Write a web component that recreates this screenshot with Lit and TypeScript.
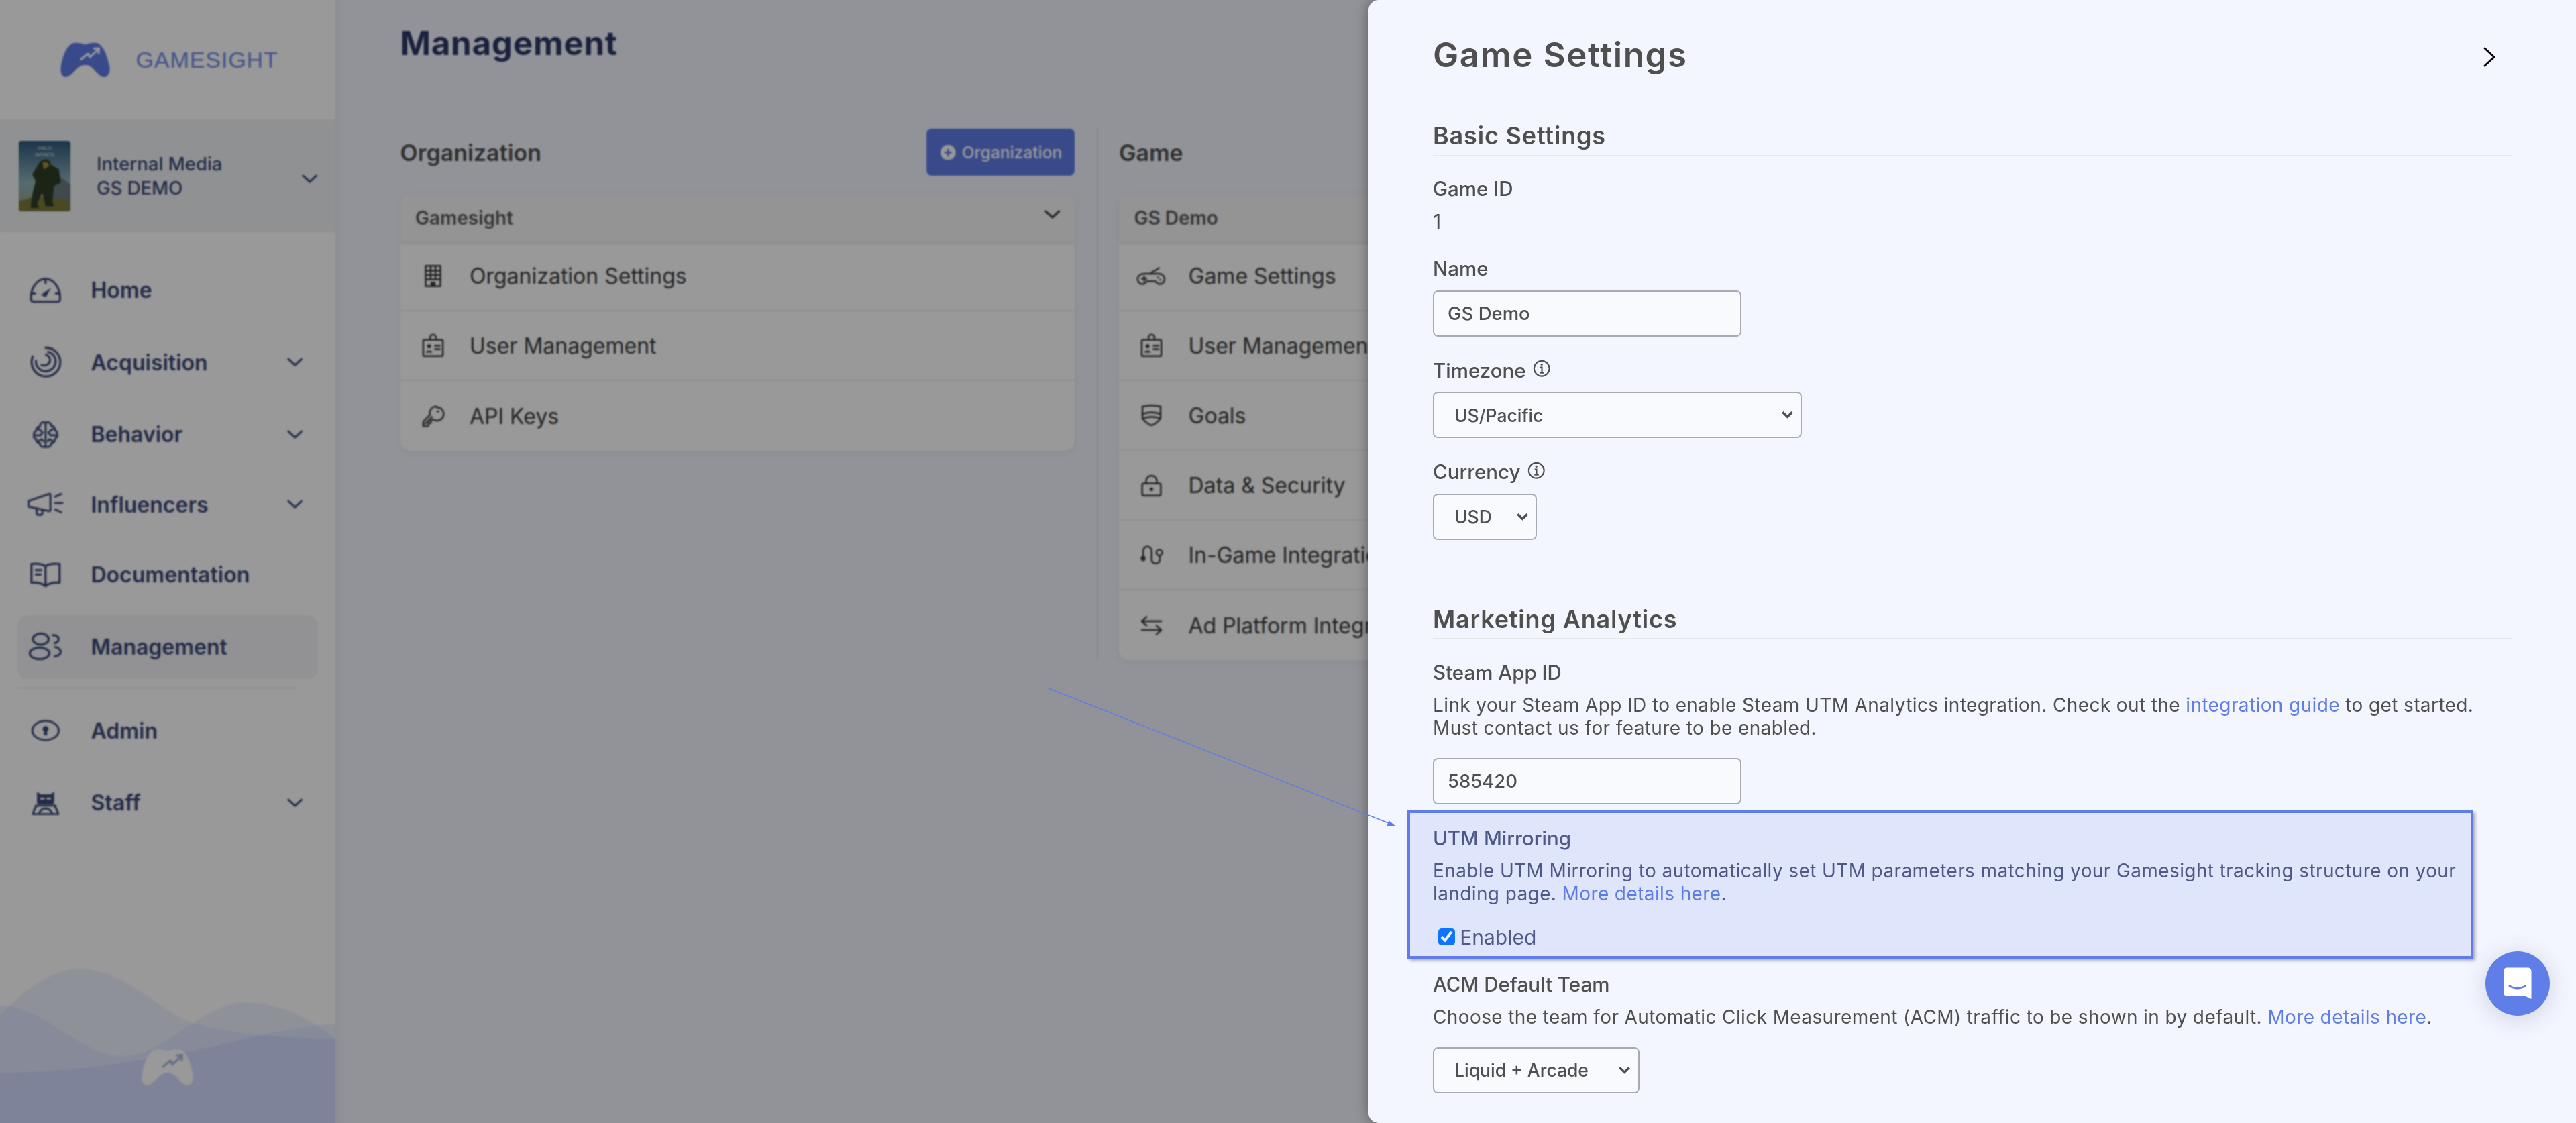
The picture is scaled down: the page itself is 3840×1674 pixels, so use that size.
import { LitElement, html, css } from "lit";
import { customElement } from "lit/decorators.js";

const chevron = html`<svg class="chev" viewBox="0 0 12 7"><path d="M1 1l5 4.6L11 1" /></svg>`;

const navIcons = {
  home: html`<svg viewBox="0 0 24 20" class="nico"><path d="M3.4 18.6C1.8 18.6 1 17.8 1 16 1 7.8 5.8 1.4 12 1.4S23 7.8 23 16c0 1.8-.8 2.6-2.4 2.6z" /><path d="M12 1.600v3M1.400 12.400h2.800M22.600 12.400h-2.800" /><path class="solid" d="M8.600 13.400l7.600-5.200-4 7z" /></svg>`,
  acquisition: html`<svg viewBox="0 0 24 24" class="nico"><path d="M2.400 7.800A10.800 10.800 0 1 0 12 1.200" /><path d="M4.800 11a7.400 7.400 0 0 0 14.700 1.600C20.200 8.400 17.400 5 14 4.400" /><path d="M9 14.200c3 1 6-.6 6.400-3.200.3-2-1-4-3-4.600" /></svg>`,
  behavior: html`<svg viewBox="0 0 24 24" class="nico small"><path d="M9 2.200c1.400-.8 2.400-.4 3 .4.600-.8 1.600-1.200 3-.4 1.200.6 1.800 1.800 1.600 2.800 1.800-.2 3.400 1.400 3 3.400 1.600.6 2.400 2.200 1.800 3.600.6 1.400-.2 3-1.800 3.600.4 2-1.200 3.600-3 3.400.2 1-.4 2.200-1.600 2.800-1.400.8-2.400.4-3-.4-.6.8-1.600 1.200-3 .4-1.200-.6-1.800-1.800-1.600-2.800-1.800.2-3.400-1.400-3-3.400C2.800 15.600 2 14 2.600 12.600 2 11.200 2.800 9.600 4.400 9c-.4-2 1.200-3.600 3-3.400C7.200 4.600 7.800 2.800 9 2.200z" /><path d="M12 2.600v19.200M2.600 12.600h5.200l2-2.400M21.400 12.600h-5.200l-2-2.400M6 7.400l2.600 1.800M18 7.400l-2.600 1.800M6 17.400l2.800-1.600 1.400 1.600M18 17.400l-2.800-1.600-1.400 1.600" /></svg>`,
  influencers: html`<svg viewBox="0 0 30 20" class="nico wide"><path d="M1.400 7.400v4.600l16.600 3.400c.8.100 1.200-.3 1.200-1V2.600c0-.8-.5-1.200-1.200-1zM8 13.300v3.800c0 2 4.600 2 4.600 0v-2.800" /><path d="M23 3.800l5-2.200M23 9h6M23 14.200l5 2.200" /></svg>`,
  documentation: html`<svg viewBox="0 0 24 20" class="nico"><path d="M12 3.400C9 1.800 5 1.400 1.400 1.800V16c3.600-.3 7.600 0 10.600 2.600 3-2.600 7-2.900 10.600-2.600V1.800C19 1.400 15 1.800 12 3.400zV18.600" /><path d="M4.800 6.400h4M4.800 9.800h3.600" /></svg>`,
  management: html`<svg viewBox="0 0 26 22" class="nico wider"><ellipse cx="9.500" cy="5.400" rx="6" ry="4.200" /><ellipse cx="8.600" cy="16.200" rx="7.400" ry="4.400" /><path d="M18.600 2.400c2.600 0 4.400 1.200 4.400 3 0 1.400-1.200 2.600-3 3M20.400 11.400c2.400.4 4.200 2 4.200 3.600 0 1.800-2 3.200-4.600 3.400" /></svg>`,
  admin: html`<svg viewBox="0 0 24 18" class="nico small"><ellipse cx="12" cy="9" rx="10.800" ry="7.800" /><circle class="solid" cx="12" cy="7.800" r="2.400" /><path class="solid" d="M11 8.800h2l.6 4h-3.200z" /></svg>`,
  staff: html`<svg viewBox="0 0 24 20" class="nico small"><path class="solid" d="M5 .8l2.800 2.200h8.400L19 .8v8.800c0 1-.8 1.600-1.800 1.600H6.800c-1 0-1.800-.6-1.800-1.600z" /><path d="M3.800 12.200h16.400M1.800 19c.6-3 1.800-5.400 3.200-6.800M22.200 19c-.6-3-1.800-5.400-3.200-6.800M1.600 19.200h20.800M7 18c1-2.400 3-3.400 5-3.400s4 1 5 3.400" /><path class="cut" d="M8.200 6.400h2.400M13.400 6.400h2.400" /></svg>`,
};

const rowIcons = {
  building: html`<svg viewBox="0 0 20 24" class="rico"><rect x="2.500" y="1.500" width="15" height="21" /><path d="M2.500 6.500h15M2.500 11h15M2.500 15.500h15M7.500 1.500v14M12.500 1.500v14" /><path class="solid" d="M7.500 18h5v4.500h-5z" /></svg>`,
  badge: html`<svg viewBox="0 0 24 24" class="rico"><rect x="2" y="6" width="20" height="16.500" rx="1" /><path d="M9 6V3.500a3 3 0 0 1 6 0V6" /><circle class="solid" cx="8" cy="12.500" r="2" /><path class="solid" d="M4.600 18.800c.4-2.600 6.400-2.600 6.800 0z" /><path d="M14 12h5M14 15.500h5" /></svg>`,
  key: html`<svg viewBox="0 0 24 24" class="rico"><path d="M15.500 1.800a6.800 6.800 0 0 0-6.600 8.600L2 17.600v4.600h4.400l1-1v-2.400h2.400v-2.600l2.600-.9a6.800 6.800 0 1 0 3.100-12.500z" /><path d="M4 19.600l7-7" /><circle class="solid" cx="17" cy="7" r="1.200" /></svg>`,
  pad: html`<svg viewBox="0 0 30 20" class="rico wide"><path d="M7.500 7.500h15c4 0 6.500 2.600 6.500 5.600 0 3-2.300 5.400-5 5.400-2.400 0-3.600-1.400-4.800-3H10.300c-1.200 1.600-2.400 3-4.800 3-2.700 0-5-2.400-5-5.400s3-5.600 7-5.600z" /><path d="M15 7.500C15 4 19 5.500 23 1.500" /><path d="M5 12.800h5M7.500 10.300v5" /><circle class="solid" cx="22" cy="11.500" r="1" /><circle class="solid" cx="24.500" cy="14" r="1" /></svg>`,
  shield: html`<svg viewBox="0 0 24 24" class="rico"><path d="M2.800 2.600c6-1.400 12.400-1.400 18.400 0v10.800c0 3-4.400 6.600-9.200 8.600-4.800-2-9.200-5.600-9.200-8.600z" /><path d="M3 10.400c6-2.400 12-2.400 18 0M3 15c6-2.400 12-2.400 18 0" /></svg>`,
  lock: html`<svg viewBox="0 0 24 24" class="rico"><rect x="2.500" y="10" width="19" height="12.500" rx="1.800" /><path d="M6.500 10V7.600a5.500 5.500 0 0 1 11 0V10" /><circle class="solid" cx="12" cy="16" r="1.800" /></svg>`,
  route: html`<svg viewBox="0 0 24 24" class="rico"><path d="M3.500 13V7.500a4.300 4.300 0 0 1 8.600 0v9.500a4.300 4.300 0 0 0 8.400 0v-3.500" /><circle cx="20" cy="9.500" r="3" /><circle class="solid" cx="3.500" cy="15.500" r="2.600" /></svg>`,
  swap: html`<svg viewBox="0 0 24 24" class="rico"><path d="M2 7.500h20M7 3L2 7.500 7 12" /><path d="M22 16.500H2M17 12l5 4.500-5 4.500" /></svg>`,
};

const logo = (cls: string) => html`<svg class=${cls} viewBox="0 0 74 52">
  <path class="logo-body" d="M20 1c7-2 13 2 17 2s10-4 17-2c9 2 15 16 19 34 2 10-2 17-8 17-7 0-13-10-19-15-5-4-13-4-18 0-7 5-13 15-20 15-6 0-9-7-7-17C4 17 11 3 20 1z" />
  <path class="logo-arrow" d="M30 26l11-9 3 5 12-11M49 9.500l8.500-.5-.5 8.500" />
</svg>`;

const info = html`<svg class="info" viewBox="0 0 20 20"><circle cx="10" cy="10" r="8.600" /><path d="M8 8.800h2.200v6M7.800 14.900h4.800" /><circle class="solid" cx="10" cy="5.500" r="1.200" /></svg>`;

const nav = [
  { label: "Home", icon: navIcons.home },
  { label: "Acquisition", icon: navIcons.acquisition, more: true },
  { label: "Behavior", icon: navIcons.behavior, more: true },
  { label: "Influencers", icon: navIcons.influencers, more: true, tight: true },
  { label: "Documentation", icon: navIcons.documentation, tight: true },
  { label: "Management", icon: navIcons.management, active: true },
];

const orgRows = [
  { label: "Organization Settings", icon: rowIcons.building },
  { label: "User Management", icon: rowIcons.badge },
  { label: "API Keys", icon: rowIcons.key },
];

const gameRows = [
  { label: "Game Settings", icon: rowIcons.pad },
  { label: "User Management", icon: rowIcons.badge },
  { label: "Goals", icon: rowIcons.shield },
  { label: "Data & Security", icon: rowIcons.lock },
  { label: "In-Game Integrations", icon: rowIcons.route },
  { label: "Ad Platform Integrations", icon: rowIcons.swap },
];

@customElement("app-root")
export class AppRoot extends LitElement {
  static styles = css`
    :host {
      display: block;
      position: relative;
      zoom: 2.5;
      width: 1536px;
      height: 669.6px;
      overflow: hidden;
      background: #f3f6fe;
      font-family: Inter, "Noto Sans", sans-serif;
      color: #4f4f4f;
    }

    .page {
      display: flex;
      height: 100%;
    }

    /* sidebar */
    .sidebar {
      position: relative;
      flex: 0 0 200px;
      background: #fff;
      display: flex;
      flex-direction: column;
      color: #3c4878;
    }
    .brand {
      height: 71.2px;
      display: flex;
      align-items: center;
      padding-left: 36px;
      gap: 15.4px;
      flex: none;
    }
    .brand-logo {
      width: 29.6px;
      height: 20.8px;
      flex: none;
    }
    .logo-body {
      fill: #5f7ce8;
    }
    .logo-arrow {
      fill: none;
      stroke: #fff;
      stroke-width: 3;
    }
    .brand-name {
      font-family: "Liberation Sans", Arial, sans-serif;
      font-size: 13.6px;
      letter-spacing: 0.36px;
      color: #6f88e8;
    }
    .account {
      height: 67.2px;
      flex: none;
      background: #f1f2f6;
      display: flex;
      align-items: center;
      padding: 0 10.6px 0 11px;
    }
    .thumb {
      width: 31px;
      height: 42px;
      border-radius: 1.5px;
      flex: none;
      margin-right: 15.6px;
    }
    .account-text {
      flex: 1;
      font-size: 11px;
      line-height: 14.4px;
      font-weight: 500;
    }
    .account .chev {
      margin-top: 4px;
    }
    .chev {
      width: 9.4px;
      height: 5.6px;
      flex: none;
    }
    .chev path {
      fill: none;
      stroke: currentColor;
      stroke-width: 1.5;
      stroke-linecap: round;
      stroke-linejoin: round;
    }
    .nav {
      padding: 15.6px 10.4px 0;
      display: flex;
      flex-direction: column;
    }
    .item {
      height: 38px;
      margin-bottom: 5px;
      flex: none;
      display: flex;
      align-items: center;
      border-radius: 6px;
      font-size: 12.8px;
      font-weight: 600;
      padding-right: 9px;
    }
    .item.tight {
      margin-top: -1.2px;
    }
    .item.active {
      background: #f3f4f7;
    }
    .icon-box {
      width: 22px;
      margin-left: 5.6px;
      margin-right: 16.2px;
      flex: none;
      display: flex;
      justify-content: center;
    }
    .nico {
      width: 19px;
      height: 19px;
      flex: none;
      fill: none;
      stroke: currentColor;
      stroke-width: 1.6;
      stroke-linecap: round;
      stroke-linejoin: round;
      overflow: visible;
    }
    .nico.wide {
      width: 22px;
    }
    .nico.wider {
      width: 20.5px;
    }
    .nico.small {
      width: 17.5px;
      height: 17.5px;
    }
    .solid {
      fill: currentColor;
      stroke: none;
    }
    .cut {
      stroke: #fff;
      stroke-width: 1.5;
    }
    .item .label {
      flex: 1;
    }
    .rule {
      height: 1px;
      width: 166.6px;
      background: #f4f4f6;
      margin: 0 0 6px;
      flex: none;
    }
    .waves {
      position: absolute;
      left: 0;
      bottom: 0;
      width: 200px;
      height: 92px;
    }
    .waves path {
      fill: rgba(100, 126, 255, 0.1);
    }
    .foot-logo {
      position: absolute;
      left: 84.3px;
      bottom: 22.6px;
      width: 31px;
      height: 22px;
    }
    .foot-logo .logo-body {
      fill: #fff;
    }
    .foot-logo .logo-arrow {
      stroke: #a9b4dd;
    }

    /* main column */
    .main {
      flex: 1;
      min-width: 0;
      padding: 0 0 0 38.6px;
      box-shadow: inset 6px 0 8px -6px rgba(0, 0, 0, 0.08);
    }
    .page-title {
      padding-top: 14.5px;
      font-size: 19.6px;
      line-height: 23px;
      letter-spacing: 0.35px;
      font-weight: 700;
      color: #2e3866;
    }
    .cols {
      display: flex;
      margin-top: 39.3px;
      height: 316.2px;
    }
    .col {
      width: 402.2px;
      flex: none;
    }
    .col.first {
      padding-right: 13px;
      border-right: 1px solid #dfe1e8;
      margin-right: 12.6px;
      box-sizing: content-box;
    }
    .col-head {
      height: 28px;
      display: flex;
      justify-content: space-between;
      align-items: center;
      font-size: 13.6px;
      font-weight: 600;
      margin-bottom: 11.2px;
    }
    .add {
      width: 88.4px;
      height: 28px;
      background: #5f7ce8;
      color: #fff;
      border-radius: 3px;
      display: flex;
      align-items: center;
      justify-content: center;
      gap: 3.6px;
      padding-left: 1px;
      box-sizing: border-box;
      font-size: 9.8px;
      font-weight: 500;
    }
    .add svg {
      width: 9px;
      height: 9px;
    }
    .card {
      background: #fff;
      border-radius: 6px;
      box-shadow: 0 1px 6px rgba(60, 70, 110, 0.08);
      overflow: hidden;
    }
    .card-head {
      height: 28px;
      display: flex;
      align-items: center;
      justify-content: space-between;
      padding: 0 8.6px 0 9px;
      background: #f7f7f8;
      box-shadow: 0 1px 2px rgba(0, 0, 0, 0.12);
      font-size: 11.2px;
      font-weight: 600;
      color: #5c5c5c;
      position: relative;
    }
    .card-head .chev {
      margin-top: -4px;
      color: #333;
    }
    .row {
      height: 41.6px;
      display: flex;
      align-items: center;
      font-size: 12.8px;
      border-bottom: 1px solid #eeeeef;
      box-sizing: border-box;
      color: #3d3d3d;
    }
    .row:last-child {
      border-bottom: 0;
    }
    .row-icon {
      width: 14px;
      margin: 0 15px 0 12.4px;
      display: flex;
      justify-content: center;
      flex: none;
    }
    .rico {
      width: 14px;
      height: 14px;
      flex: none;
      fill: none;
      stroke: currentColor;
      stroke-width: 1.7;
      stroke-linecap: round;
      stroke-linejoin: round;
      overflow: visible;
    }
    .rico.wide {
      width: 17px;
    }

    /* dim layer */
    .dim {
      position: absolute;
      inset: 0;
      background: rgba(0, 0, 0, 0.4);
      backdrop-filter: blur(0.5px);
    }

    /* drawer */
    .drawer {
      position: absolute;
      top: 0;
      right: 0;
      bottom: 0;
      width: 720px;
      box-sizing: border-box;
      padding: 0 38.4px;
      background: #f3f6fe;
      border-radius: 6px 0 0 6px;
      box-shadow: 0 0 8px rgba(0, 0, 0, 0.4);
      overflow: hidden;
    }
    .drawer-head {
      height: 44.7px;
      padding-top: 20.7px;
      box-sizing: border-box;
      display: flex;
      justify-content: space-between;
    }
    h1 {
      margin: 0;
      font-size: 20.4px;
      line-height: 24px;
      letter-spacing: 0.65px;
      font-weight: 600;
    }
    .close {
      width: 7px;
      height: 12px;
      margin: 7.2px 10px 0 0;
      fill: none;
      stroke: #000;
      stroke-width: 1.2;
      stroke-linecap: round;
      stroke-linejoin: round;
      overflow: visible;
    }
    h2 {
      margin: 0 0 11.4px;
      font-size: 14.4px;
      line-height: 18px;
      letter-spacing: 0.33px;
      font-weight: 600;
      padding-bottom: 2.2px;
      border-bottom: 1px solid #e4e7ec;
    }
    .basic {
      margin-top: 27.4px;
    }
    .marketing {
      margin-top: 38.4px;
    }
    .field {
      margin-bottom: 12px;
    }
    label,
    .label-line {
      display: flex;
      align-items: center;
      gap: 4px;
      font-size: 11.8px;
      line-height: 16px;
      font-weight: 500;
      margin-bottom: 5px;
    }
    .value {
      font-size: 12px;
      line-height: 16px;
      margin-top: -1.4px;
    }
    .info {
      width: 10.6px;
      height: 10.6px;
      fill: none;
      stroke: currentColor;
      stroke-width: 1.6;
      margin-top: -2px;
    }
    .desc {
      font-size: 11.2px;
      line-height: 13.6px;
      letter-spacing: 0.155px;
      margin: 0 0 11px;
      font-weight: 400;
    }
    a {
      color: #5f7ce8;
      text-decoration: none;
    }
    input[type="text"],
    select {
      display: block;
      box-sizing: border-box;
      height: 27.6px;
      border: 1px solid #a8aab0;
      border-radius: 3px;
      background-color: #f9fafe;
      font-family: inherit;
      font-size: 11px;
      font-weight: 500;
      color: #4f4f4f;
      margin: 0;
      padding: 0 8px;
    }
    select {
      appearance: none;
      font-size: 10.6px;
      padding-left: 12px;
      background-image: url("data:image/svg+xml,%3Csvg xmlns='http://www.w3.org/2000/svg' viewBox='0 0 10 7'%3E%3Cpath d='M1.200 1.200L5 5l3.800-3.800' fill='none' stroke='%234f4f4f' stroke-width='1.800'/%3E%3C/svg%3E");
      background-repeat: no-repeat;
      background-size: 7.4px 5.2px;
      background-position: right 4.4px center;
    }
    .w-text {
      width: 184px;
    }
    .w-tz {
      width: 220px;
    }
    .w-cur {
      width: 62px;
    }
    .w-team {
      width: 123px;
    }
    .check {
      display: flex;
      align-items: center;
      font-size: 12px;
      line-height: 16px;
      margin: 0 0 0 3.2px;
      gap: 2.5px;
      font-weight: 400;
    }
    .check input {
      width: 10.4px;
      height: 10.4px;
      margin: 0;
    }
    .utm {
      position: relative;
      color: #4d5478;
    }
    .mark {
      position: absolute;
      left: -15.2px;
      right: 22.8px;
      top: -8.2px;
      bottom: -5px;
      box-sizing: border-box;
      border: 1.6px solid #5f7ce8;
      background: rgba(95, 124, 232, 0.13);
      box-shadow: 1px 1px 2px rgba(0, 0, 0, 0.35);
    }

    /* chat launcher */
    .launcher {
      position: absolute;
      left: 1482px;
      top: 567px;
      width: 38.4px;
      height: 38.4px;
      border-radius: 50%;
      background: #5f7ee8;
      box-shadow: 0 2px 14px rgba(60, 70, 110, 0.2);
      display: flex;
      align-items: center;
      justify-content: center;
    }
    .launcher svg {
      width: 16.6px;
      height: 19px;
    }

    .pointer {
      position: absolute;
      left: 0;
      top: 0;
      width: 1536px;
      height: 669.6px;
      pointer-events: none;
    }
  `;

  private renderCard(title: string, rows: { label: string; icon: unknown }[], arrow: boolean) {
    return html`<div class="card">
      <div class="card-head"><span>${title}</span>${arrow ? chevron : ""}</div>
      ${rows.map(
        (r) => html`<div class="row"><span class="row-icon">${r.icon}</span>${r.label}</div>`,
      )}
    </div>`;
  }

  render() {
    return html`
      <div class="page">
        <aside class="sidebar">
          <div class="brand">${logo("brand-logo")}<span class="brand-name">GAMESIGHT</span></div>
          <div class="account">
            <svg class="thumb" viewBox="0 0 31 42">
              <defs>
                <linearGradient id="sky" x1="0" y1="0" x2="0" y2="1">
                  <stop offset="0" stop-color="#2f5a7c" />
                  <stop offset="0.6" stop-color="#8fb3bd" />
                  <stop offset="1" stop-color="#8f9a70" />
                </linearGradient>
              </defs>
              <rect width="31" height="42" fill="url(#sky)" />
              <text x="15.5" y="5" font-size="3" text-anchor="middle" fill="#dbe6ee" font-family="Liberation Sans">HALO</text>
              <text x="15.5" y="9" font-size="2.8" text-anchor="middle" fill="#dbe6ee" font-family="Liberation Sans">INFINITE</text>
              <path d="M19 28l5-7 7 5v9H19z" fill="#6b7a80" />
              <path d="M0 36l10-3 21 2v7H0z" fill="#7c7a3a" />
              <path d="M13 12c3-2 6-1 6 2l5 3 1 8-4 2-1 9 1 3h-5l-2-8-3 6 1 3H7l1-8 2-8-2-4 3-5z" fill="#2f3d26" />
              <path d="M14 13c2-1 4 0 4 2l-3 2z" fill="#a98a3e" />
            </svg>
            <div class="account-text">Internal Media<br />GS DEMO</div>
            ${chevron}
          </div>
          <nav class="nav">
            ${nav.map(
              (n) => html`<div class="item ${n.active ? "active" : ""} ${n.tight ? "tight" : ""}">
                <span class="icon-box">${n.icon}</span>
                <span class="label">${n.label}</span>
                ${n.more ? chevron : ""}
              </div>`,
            )}
            <div class="rule"></div>
            <div class="item">
              <span class="icon-box">${navIcons.admin}</span>
              <span class="label">Admin</span>
            </div>
            <div class="item">
              <span class="icon-box">${navIcons.staff}</span>
              <span class="label">Staff</span>
              ${chevron}
            </div>
          </nav>
          <svg class="waves" viewBox="0 0 200 92" preserveAspectRatio="none">
            <path d="M0 28C14 12 33 0 47 0c26 0 46 23 66 32 20 6 47 9 87 10v50H0z" />
            <path d="M0 22c27 0 47 30 73 30 27 0 47-32 74-32 20 0 40 11 53 22v50H0z" />
            <path d="M0 62c53 0 107-11 141-19 26-6 46-10 59-10v59H0z" />
          </svg>
          ${logo("foot-logo")}
        </aside>

        <main class="main">
          <div class="page-title">Management</div>
          <div class="cols">
            <section class="col first">
              <div class="col-head">
                <span>Organization</span>
                <span class="add">
                  <svg viewBox="0 0 10 10">
                    <circle cx="5" cy="5" r="5" fill="#fff" />
                    <path d="M5 2.500v5M2.500 5h5" stroke="#5f7ce8" stroke-width="1.200" />
                  </svg>
                  Organization
                </span>
              </div>
              ${this.renderCard("Gamesight", orgRows, true)}
            </section>
            <section class="col">
              <div class="col-head"><span>Game</span></div>
              ${this.renderCard("GS Demo", gameRows, false)}
            </section>
          </div>
        </main>
      </div>

      <div class="dim"></div>

      <aside class="drawer">
        <div class="drawer-head">
          <h1>Game Settings</h1>
          <svg class="close" viewBox="0 0 7 12"><path d="M.8.800L6.400 6 .8 11.200" /></svg>
        </div>

        <h2 class="basic">Basic Settings</h2>
        <div class="field">
          <div class="label-line">Game ID</div>
          <div class="value">1</div>
        </div>
        <div class="field">
          <label>Name</label>
          <input class="w-text" type="text" .value=${"GS Demo"} />
        </div>
        <div class="field">
          <label>Timezone ${info}</label>
          <select class="w-tz"><option>US/Pacific</option></select>
        </div>
        <div class="field">
          <label>Currency ${info}</label>
          <select class="w-cur"><option>USD</option></select>
        </div>

        <h2 class="marketing">Marketing Analytics</h2>
        <div class="field">
          <label>Steam App ID</label>
          <p class="desc">
            Link your Steam App ID to enable Steam UTM Analytics integration. Check out the
            <a>integration guide</a> to get started.<br />Must contact us for feature to be enabled.
          </p>
          <input class="w-text" type="text" .value=${"585420"} />
        </div>
        <div class="field utm">
          <label>UTM Mirroring</label>
          <p class="desc">
            Enable UTM Mirroring to automatically set UTM parameters matching your Gamesight tracking
            structure on your<br />landing page. <a>More details here</a>.
          </p>
          <div class="check"><input type="checkbox" checked />Enabled</div>
          <div class="mark"></div>
        </div>
        <div class="field">
          <label>ACM Default Team</label>
          <p class="desc">
            Choose the team for Automatic Click Measurement (ACM) traffic to be shown in by default.
            <a>More details here</a>.
          </p>
          <select class="w-team"><option>Liquid + Arcade</option></select>
        </div>
      </aside>

      <div class="launcher">
        <svg viewBox="0 0 17 19">
          <path fill="#fff" d="M2 0h13c1.100 0 2 .9 2 2v17l-4-1.800H2c-1.100 0-2-.9-2-2V2C0 .9.900 0 2 0z" />
          <path d="M3.600 11.200c3 1.800 6.800 1.800 9.800 0" fill="none" stroke="#5f7ee8" stroke-width="1.100" stroke-linecap="round" />
        </svg>
      </div>

      <svg class="pointer" viewBox="0 0 1536 669.6">
        <path d="M625.200 410.400L829 491.200" stroke="#5f7ce8" stroke-width="0.6" fill="none" />
        <path d="M832.400 492.800l-5.400-.4 1.300-3z" fill="#5f7ce8" />
      </svg>
    `;
  }
}
